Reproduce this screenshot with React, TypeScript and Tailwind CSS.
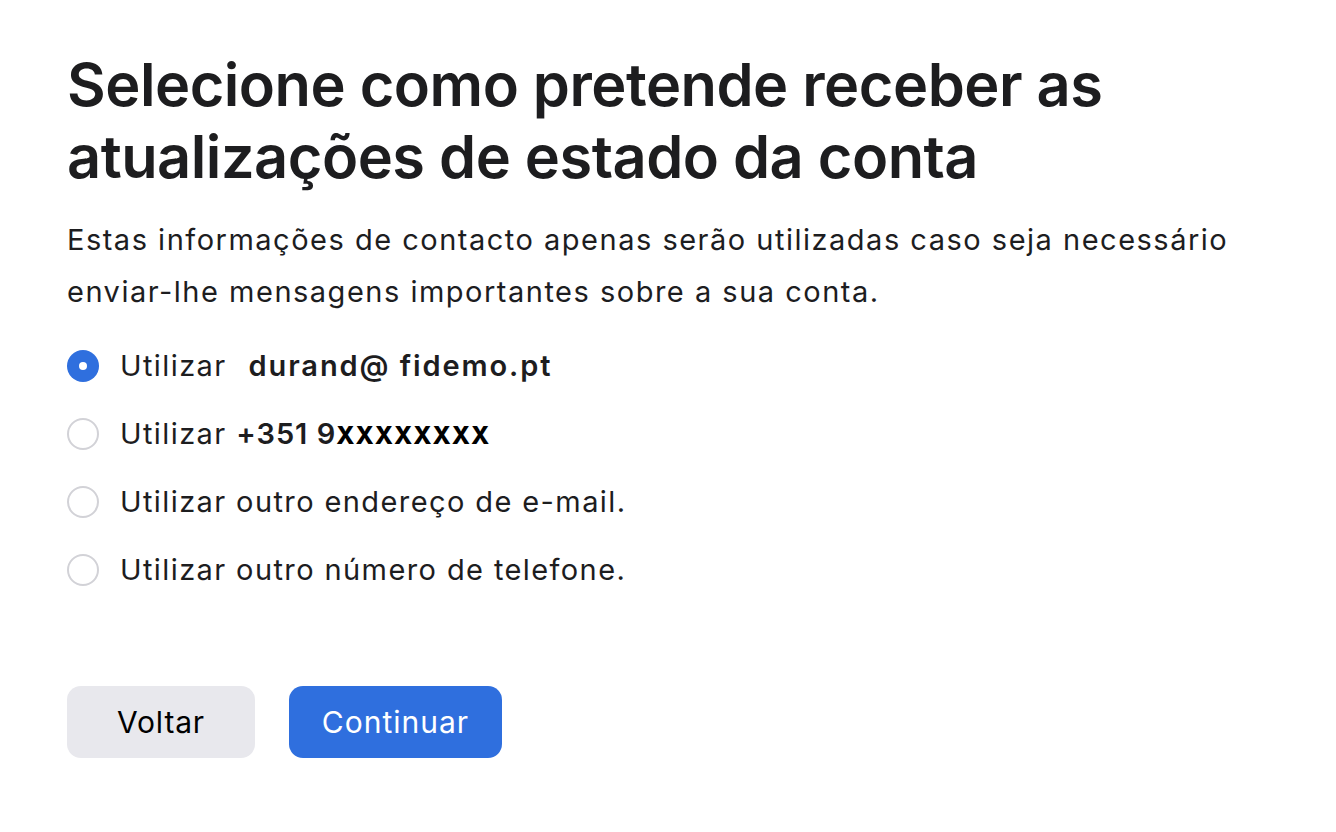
import { useState } from "react";

const options = [
  { id: "email", label: "Utilizar", extra: "email" },
  { id: "phone", label: "Utilizar", extra: "phone" },
  { id: "otherEmail", label: "Utilizar outro endereço de e-mail.", extra: "" },
  { id: "otherPhone", label: "Utilizar outro número de telefone.", extra: "" },
];

const Radio = ({ checked }: { checked: boolean }) => {
  if (checked) {
    return (
      <span className="flex h-[32px] w-[32px] shrink-0 items-center justify-center rounded-full bg-[#2f6fde]">
        <span className="h-[8px] w-[8px] rounded-full bg-white" />
      </span>
    );
  }
  return <span className="h-[32px] w-[32px] shrink-0 rounded-full border-2 border-[#d2d2d7] bg-white" />;
};

export default function App() {
  const [selected, setSelected] = useState("email");

  return (
    <div className="min-h-screen w-full bg-white text-[#1d1d1f] font-['Inter','Liberation_Sans',sans-serif]">
      <div className="px-[67px] pt-[48px]">
        <h1 className="text-[59.5px] font-semibold leading-[72px] tracking-[-0.5px]">
          Selecione como pretende receber as
          <br />
          atualizações de estado da conta
        </h1>
        <p className="mt-[22px] text-[29px] leading-[52px] tracking-[1.5px] text-[#1d1d1f]">
          Estas informações de contacto apenas serão utilizadas caso seja necessário
          <br />
          enviar-lhe mensagens importantes sobre a sua conta.
        </p>

        <div className="mt-[14px] flex flex-col">
          {options.map((opt) => (
            <label
              key={opt.id}
              className="flex h-[68px] cursor-pointer items-center gap-[21px]"
              onClick={() => setSelected(opt.id)}
            >
              <Radio checked={selected === opt.id} />
              <span className="text-[29px] tracking-[1.4px]">
                {opt.label}
                {opt.extra === "email" && (
                  <span className="ml-[22px] font-semibold tracking-[1.9px]">durand@ fidemo.pt</span>
                )}
                {opt.extra === "phone" && (
                  <>
                    {" "}
                    <span className="font-semibold tracking-[1px]">+351 9</span>
                    <span className="text-[24px] font-extrabold tracking-[1px] text-black">XXXXXXXX</span>
                  </>
                )}
              </span>
            </label>
          ))}
        </div>

        <div className="mt-[82px] flex gap-[34px]">
          <button className="h-[72px] w-[188px] rounded-[14px] bg-[#e8e8ed] text-[30px] tracking-[0.8px] text-black">
            Voltar
          </button>
          <button className="h-[72px] w-[213px] rounded-[14px] bg-[#2f6fde] text-[30px] tracking-[1px] text-white">
            Continuar
          </button>
        </div>
      </div>
    </div>
  );
}
